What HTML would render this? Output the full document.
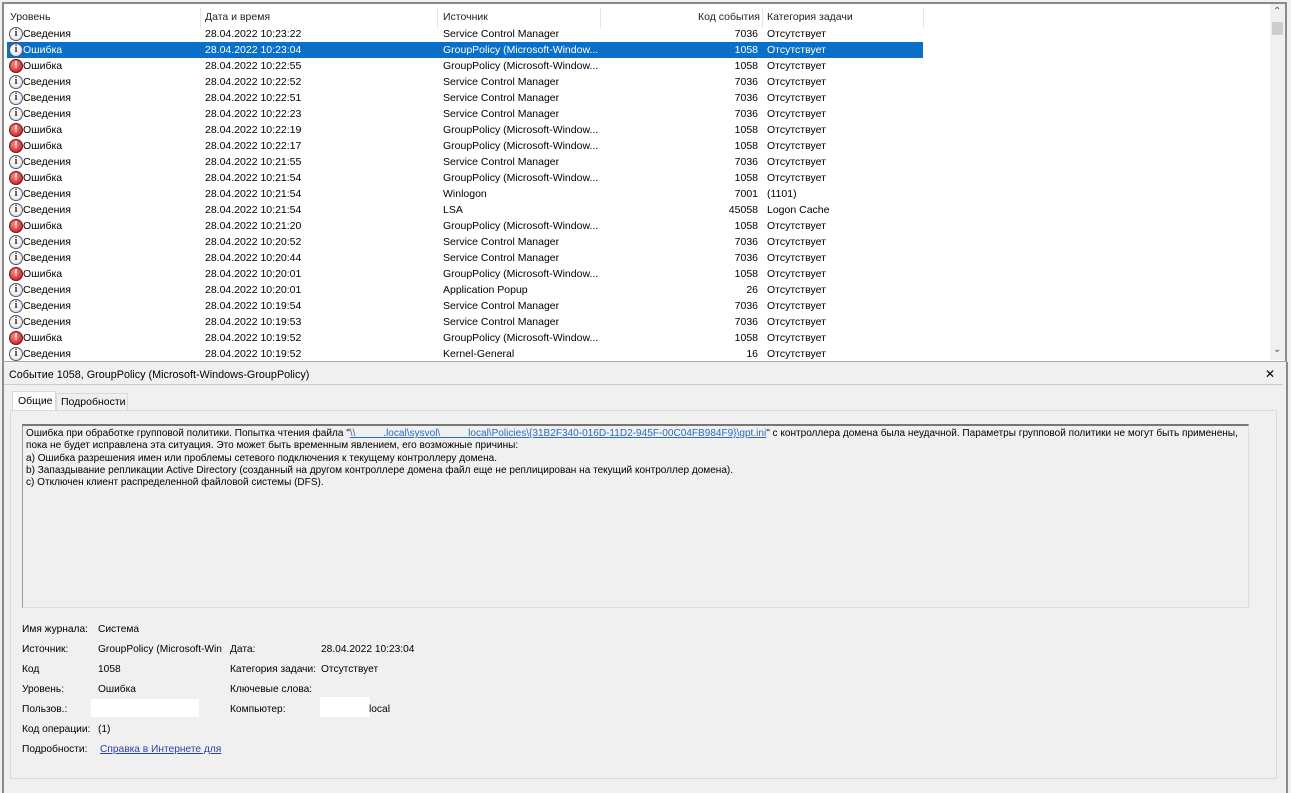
<!DOCTYPE html>
<html><head><meta charset="utf-8"><style>
*{margin:0;padding:0;box-sizing:border-box}
body{width:1291px;height:793px;background:#f0f0f0;font-family:"Liberation Sans","DejaVu Sans",sans-serif;font-size:10.5px;color:#000;position:relative;overflow:hidden}
.abs{position:absolute;white-space:nowrap}
#list{position:absolute;left:2px;top:2px;width:1285px;height:360px;background:#fff;border:2px solid #8a8a8a;border-bottom:1px solid #aaa}
.hdr{position:absolute;top:6px;height:18px;line-height:14px;color:#222}
.sep{position:absolute;top:4px;width:1px;height:20px;background:#e5e5e5}
.row{position:absolute;left:3px;width:916px;height:16px;line-height:16px}
.row.sel{background:#0a6fc9;color:#fff}
.row span{position:absolute;top:0}
.ic{position:absolute;left:2px;top:1px;width:14px;height:14px;border-radius:50%;border:1px solid #555;background:radial-gradient(circle at 40% 35%,#fff,#dde);text-align:center;font:bold 10px/12px "Liberation Serif",serif;color:#334}
.ic.e{background:radial-gradient(circle at 40% 35%,#f88,#b11);color:#fff;border-color:#711;font-family:"Liberation Sans",sans-serif}
.sb{position:absolute;right:0;top:0;width:15px;height:356px;background:#f0f0f0}
.d{font-size:10.2px}
</style></head><body>
<div id="list">
<div class="hdr" style="left:6px">Уровень</div>
<div class="hdr" style="left:201px">Дата и время</div>
<div class="hdr" style="left:439px">Источник</div>
<div class="hdr" style="left:694px">Код события</div>
<div class="hdr" style="left:763px">Категория задачи</div>
<div class="sep" style="left:196px"></div><div class="sep" style="left:433px"></div><div class="sep" style="left:596px"></div><div class="sep" style="left:758px"></div><div class="sep" style="left:919px"></div>
<div id="rows"></div>
<div class="sb"><div class="abs" style="left:3px;top:2px;font-size:10px;color:#555">&#8963;</div><div style="position:absolute;left:2px;top:18px;width:11px;height:13px;background:#cdcdcd"></div><div class="abs" style="left:3px;top:340px;font-size:10px;color:#555">&#8964;</div></div>
</div>
<div class="abs" style="left:9px;top:369px;font-size:10.8px">Событие 1058, GroupPolicy (Microsoft-Windows-GroupPolicy)</div>
<div class="abs" style="left:1265px;top:367px;font-weight:bold;font-size:12px">✕</div>
<div style="position:absolute;left:3px;top:384px;width:1280px;height:1px;background:#ccc"></div>
<div style="position:absolute;left:2px;top:362px;width:2px;height:431px;background:#8a8a8a"></div>
<div style="position:absolute;left:1286px;top:362px;width:2px;height:431px;background:#8a8a8a"></div>
<div style="position:absolute;left:12px;top:391px;width:44px;height:20px;background:#fff;border:1px solid #d9d9d9;border-bottom:none"></div>
<div class="abs" style="left:18px;top:395px">Общие</div>
<div style="position:absolute;left:56px;top:393px;width:72px;height:17px;border:1px solid #d9d9d9;border-bottom:none"></div>
<div class="abs" style="left:61px;top:396px">Подробности</div>
<div style="position:absolute;left:10px;top:410px;width:1267px;height:369px;border:1px solid #dadada;background:#f0f0f0"></div>
<div style="position:absolute;left:22px;top:424px;width:1227px;height:184px;border-top:2px solid #777;border-left:1px solid #999;border-right:1px solid #ddd;border-bottom:1px solid #ddd;background:#f0f0f0"></div>
<div class="abs" style="left:26px;top:428px;line-height:12.3px;font-size:10.05px">Ошибка при обработке групповой политики. Попытка чтения файла "<u style="color:#2a6cc0">\\&nbsp;&nbsp;&nbsp;&nbsp;&nbsp;&nbsp;&nbsp;&nbsp;&nbsp;&nbsp;.local\sysvol\&nbsp;&nbsp;&nbsp;&nbsp;&nbsp;&nbsp;&nbsp;&nbsp;&nbsp;&nbsp;local\Policies\{31B2F340-016D-11D2-945F-00C04FB984F9}\gpt.ini</u>" с контроллера домена была неудачной. Параметры групповой политики не могут быть применены,<br>пока не будет исправлена эта ситуация. Это может быть временным явлением, его возможные причины:<br>а) Ошибка разрешения имен или проблемы сетевого подключения к текущему контроллеру домена.<br>b) Запаздывание репликации Active Directory (созданный на другом контроллере домена файл еще не реплицирован на текущий контроллер домена).<br>с) Отключен клиент распределенной файловой системы (DFS).</div>
<div class="d">
<div class="abs" style="left:22px;top:624px">Имя журнала:</div><div class="abs" style="left:98px;top:624px">Система</div>
<div class="abs" style="left:22px;top:644px">Источник:</div><div class="abs" style="left:98px;top:644px">GroupPolicy (Microsoft-Win</div>
<div class="abs" style="left:230px;top:644px">Дата:</div><div class="abs" style="left:321px;top:644px">28.04.2022 10:23:04</div>
<div class="abs" style="left:22px;top:664px">Код</div><div class="abs" style="left:98px;top:664px">1058</div>
<div class="abs" style="left:230px;top:664px">Категория задачи:</div><div class="abs" style="left:321px;top:664px">Отсутствует</div>
<div class="abs" style="left:22px;top:684px">Уровень:</div><div class="abs" style="left:98px;top:684px">Ошибка</div>
<div class="abs" style="left:230px;top:684px">Ключевые слова:</div>
<div class="abs" style="left:22px;top:704px">Пользов.:</div><div style="position:absolute;left:91px;top:699px;width:108px;height:18px;background:#fff"></div>
<div class="abs" style="left:230px;top:704px">Компьютер:</div><div style="position:absolute;left:320px;top:697px;width:50px;height:20px;background:#fff"></div><div class="abs" style="left:369px;top:704px">local</div>
<div class="abs" style="left:22px;top:724px">Код операции:</div><div class="abs" style="left:98px;top:724px">(1)</div>
<div class="abs" style="left:22px;top:744px">Подробности:</div><div class="abs" style="left:100px;top:744px;color:#2b3fa8;text-decoration:underline">Справка в Интернете для</div>
</div>
<script>
var d=[["i","Сведения","10:23:22","Service Control Manager","7036","Отсутствует"],["i","Ошибка","10:23:04","GroupPolicy (Microsoft-Window...","1058","Отсутствует"],["e","Ошибка","10:22:55","GroupPolicy (Microsoft-Window...","1058","Отсутствует"],["i","Сведения","10:22:52","Service Control Manager","7036","Отсутствует"],["i","Сведения","10:22:51","Service Control Manager","7036","Отсутствует"],["i","Сведения","10:22:23","Service Control Manager","7036","Отсутствует"],["e","Ошибка","10:22:19","GroupPolicy (Microsoft-Window...","1058","Отсутствует"],["e","Ошибка","10:22:17","GroupPolicy (Microsoft-Window...","1058","Отсутствует"],["i","Сведения","10:21:55","Service Control Manager","7036","Отсутствует"],["e","Ошибка","10:21:54","GroupPolicy (Microsoft-Window...","1058","Отсутствует"],["i","Сведения","10:21:54","Winlogon","7001","(1101)"],["i","Сведения","10:21:54","LSA","45058","Logon Cache"],["e","Ошибка","10:21:20","GroupPolicy (Microsoft-Window...","1058","Отсутствует"],["i","Сведения","10:20:52","Service Control Manager","7036","Отсутствует"],["i","Сведения","10:20:44","Service Control Manager","7036","Отсутствует"],["e","Ошибка","10:20:01","GroupPolicy (Microsoft-Window...","1058","Отсутствует"],["i","Сведения","10:20:01","Application Popup","26","Отсутствует"],["i","Сведения","10:19:54","Service Control Manager","7036","Отсутствует"],["i","Сведения","10:19:53","Service Control Manager","7036","Отсутствует"],["e","Ошибка","10:19:52","GroupPolicy (Microsoft-Window...","1058","Отсутствует"],["i","Сведения","10:19:52","Kernel-General","16","Отсутствует"]];
var h="";d.forEach(function(r,i){h+='<div class="row'+(i==1?' sel':'')+'" style="top:'+(22+i*16)+'px"><div class="ic '+r[0]+'">'+(r[0]=="i"?"i":"!")+'</div><span style="left:16px">'+r[1]+'</span><span style="left:198px">28.04.2022 '+r[2]+'</span><span style="left:436px">'+r[3]+'</span><span style="right:165px">'+r[4]+'</span><span style="left:760px">'+r[5]+'</span></div>'});
document.getElementById("rows").innerHTML=h;
</script>
</body></html>
